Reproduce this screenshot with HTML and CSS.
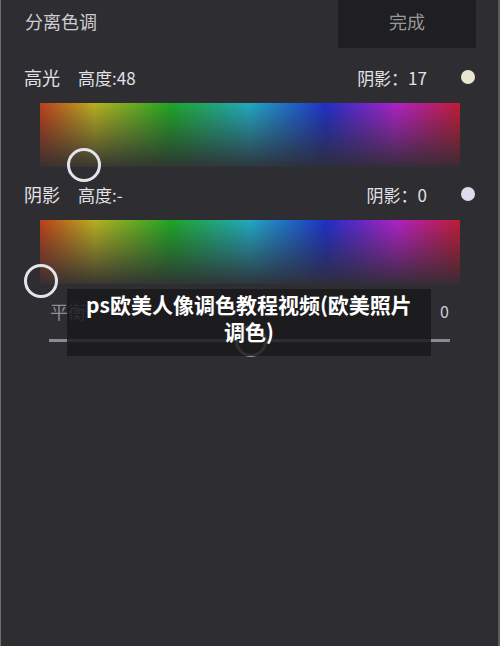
FILE: index.html
```html
<!DOCTYPE html>
<html lang="zh-CN">
<head>
  <meta charset="UTF-8">
  <meta name="viewport" content="width=device-width, initial-scale=1.0">
  <title>分离色调</title>
  <link rel="stylesheet" href="styles.css">
</head>
<body>
<div class="screen">
  <div class="header">
    <div class="title">分离色调</div>
    <div class="done">完成</div>
  </div>

  <div class="row">
    <span class="label">高光</span>
    <span class="label">高度:48</span>
    <span class="value">阴影：17</span>
    <span class="dot dot-light"></span>
  </div>
  <div class="hue">
    <span class="handle" style="left: 27px; top: 45px;"></span>
  </div>

  <div class="row">
    <span class="label">阴影</span>
    <span class="label">高度:-</span>
    <span class="value">阴影：0</span>
    <span class="dot dot-shadow"></span>
  </div>
  <div class="hue">
    <span class="handle" style="left: -16px; top: 44px;"></span>
  </div>

  <div class="balance">
    <span class="balance-label">平衡</span>
    <span class="balance-value">0</span>
  </div>
  <div class="track">
    <span class="track-handle"></span>
  </div>

  <div class="caption">ps欧美人像调色教程视频(欧美照片调色)</div>
</div>
</body>
</html>
```

FILE: styles.css
```css
:root {
  --bg-color: #2e2d32;
}

body {
  margin: 0;
  background-color: var(--bg-color);
  font-family: "Noto Sans CJK SC", "Noto Sans", sans-serif;
}

.screen {
  position: relative;
  width: 500px;
  height: 646px;
  box-sizing: border-box;
  border-left: 1px solid #707073;
  border-right: 2px solid #5a5a5e;
  background-color: var(--bg-color);
  overflow: hidden;
}

.header {
  display: flex;
  justify-content: space-between;
  height: 48px;
}

.title {
  padding-left: 24px;
  line-height: 42px;
  font-size: 18px;
  color: #cfcfd3;
}

.done {
  width: 138px;
  margin-right: 22px;
  background: #1f1f22;
  text-align: center;
  line-height: 42px;
  font-size: 18px;
  color: #98989c;
}

.row {
  display: flex;
  align-items: center;
  height: 20px;
  margin-top: 19px;
  padding: 0 23px;
  font-size: 18px;
  color: #e2e2e6;
}

.row + .hue {
  margin-top: 16px;
}

.hue + .row {
  margin-top: 17px;
}

.label {
  margin-right: 18px;
}

.label + .label {
  font-size: 17px;
}

.value {
  margin-left: auto;
  margin-right: 34px;
  font-size: 17px;
}

.dot {
  width: 14px;
  height: 14px;
  border-radius: 50%;
}

.dot-light {
  background: #e9e7d2;
}

.dot-shadow {
  background: #dcdcec;
}

.hue {
  position: relative;
  height: 64px;
  margin: 0 38px 0 39px;
  background:
    linear-gradient(to bottom, rgba(46, 45, 50, 0) 0%, rgba(46, 45, 50, 0.45) 50%, rgba(46, 45, 50, 0.92) 100%),
    linear-gradient(to right, #bb3f1c 0%, #b9b021 13%, #1fa524 31%, #22a8c2 50%, #1f2fc6 68%, #ae22c4 85%, #c01c32 100%);
}

.handle {
  position: absolute;
  width: 28px;
  height: 28px;
  border: 3px solid #e4e4ec;
  border-radius: 50%;
}

.balance {
  display: flex;
  justify-content: space-between;
  height: 20px;
  margin-top: 17px;
  padding: 0 49px 0 49px;
  font-size: 18px;
  line-height: 20px;
}

.balance-label {
  color: #8f8f94;
}

.balance-value {
  font-size: 16px;
  color: #cfcfd3;
}

.track {
  position: relative;
  height: 3px;
  margin: 18px 48px 0 48px;
  background: #8a8a94;
}

.track-handle {
  position: absolute;
  left: 186px;
  top: -14px;
  width: 26px;
  height: 26px;
  border: 3px solid #9a9aa2;
  border-radius: 50%;
  background: var(--bg-color);
}

.caption {
  position: absolute;
  left: 66px;
  top: 289px;
  width: 364px;
  height: 67px;
  box-sizing: border-box;
  padding: 2px 14px 0;
  background: rgba(24, 24, 27, 0.82);
  text-align: center;
  font-size: 21px;
  font-weight: bold;
  line-height: 27px;
  color: #ffffff;
}
```
